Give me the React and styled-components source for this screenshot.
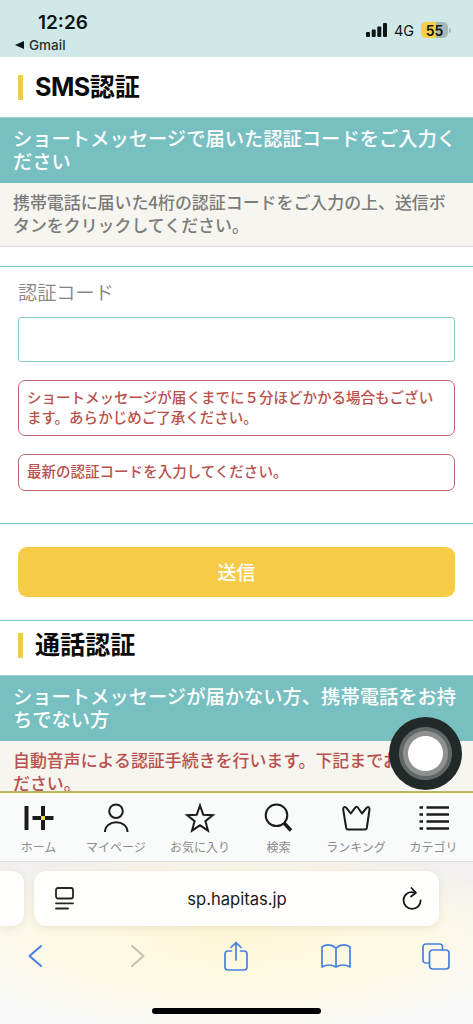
import React from 'react';
import styled, { createGlobalStyle } from 'styled-components';

const GlobalStyle = createGlobalStyle`
  * { box-sizing: border-box; }
  body {
    margin: 0;
    background: #fff;
    font-family: "Noto Sans CJK JP", "Noto Sans", sans-serif;
  }
  h2, h3, p { margin: 0; }
  svg { display: block; flex: none; overflow: visible; }
`;

const ui = '"Inter", "Liberation Sans", sans-serif';

const Screen = styled.div`
  position: relative;
  width: 473px;
  height: 1024px;
  display: flex;
  flex-direction: column;
  overflow: hidden;
  background: #fff;
`;

const StatusBar = styled.header`
  flex: none;
  display: flex;
  justify-content: space-between;
  height: 57px;
  background: #d0e8e8;
  color: #0d1515;
  font-family: ${ui};
`;

const StatusLeft = styled.div`
  display: flex;
  flex-direction: column;
  padding: 11px 0 0 15px;
`;

const Clock = styled.div`
  padding-left: 23px;
  font-size: 19px;
  line-height: 23px;
  font-weight: 600;
`;

const BackApp = styled.div`
  display: flex;
  align-items: center;
  gap: 5px;
  margin-top: 2px;
  font-size: 13.5px;
  line-height: 18px;
  font-weight: 500;
  color: #2a3333;
`;

const StatusRight = styled.div`
  display: flex;
  align-items: center;
  height: 60px;
  padding-right: 22px;
`;

const Network = styled.span`
  margin: 1px 0 0 7px;
  width: 27px;
  font-size: 14.5px;
`;

const Battery = styled.div`
  display: flex;
  align-items: center;
  justify-content: center;
  width: 27px;
  height: 16px;
  border-radius: 5px;
  background: linear-gradient(90deg, #f7d044 0 55%, #a5b9b9 55%);
  font-size: 14px;
  font-weight: 600;
`;

const BatteryTip = styled.span`
  width: 2px;
  height: 5px;
  margin-left: 1px;
  border-radius: 0 2px 2px 0;
  background: #a5b9b9;
`;

const Content = styled.main`
  flex: none;
  height: 734px;
  overflow: hidden;
`;

const Heading = styled.h2`
  display: flex;
  align-items: center;
  gap: 12px;
  height: ${(p) => p.$height}px;
  padding: 0 18px ${(p) => p.$bottom}px;
  font-family: "Inter", "Noto Sans CJK JP", sans-serif;
  font-size: 25.1px;
  line-height: 30px;
  font-weight: 700;
  color: #0b0b0b;
  &::before {
    content: "";
    width: 5px;
    height: 25px;
    background: #efcb50;
  }
`;

const HeadingText = styled.span`
  padding-bottom: ${(p) => p.$lift || 0}px;
`;

const Latin = styled.span`
  display: inline-block;
  letter-spacing: -0.5px;
`;

const Banner = styled.h3`
  height: 66px;
  padding: 9px 13px 0;
  border-top: 1px solid #a5d0d0;
  background: #78bfc1;
  color: #fff;
  font-size: 19.3px;
  line-height: 22.5px;
  font-weight: 500;
  white-space: nowrap;
`;

const Lead = styled.p`
  height: 64px;
  padding: 8px 13px 0;
  border-bottom: 1.5px solid #dadada;
  background: #f6f5ef;
  color: ${(p) => (p.$alert ? '#b9504d' : '#7b7b7a')};
  font-size: 16.93px;
  line-height: 22.7px;
  font-weight: 500;
  white-space: nowrap;
`;

const Form = styled.section`
  margin-top: 19px;
  height: 258px;
  padding: 13px 18px 0;
  border-top: 1px solid #84c3bc;
  border-bottom: 1px solid #84c3bc;
`;

const Label = styled.label`
  display: block;
  height: 37px;
  font-size: 19.2px;
  line-height: 24px;
  font-weight: 350;
  color: #858585;
`;

const CodeInput = styled.input`
  display: block;
  width: 437px;
  height: 45px;
  border: 1.5px solid #8ac8c5;
  border-radius: 3px;
  background: #fff;
  outline: none;
`;

const Notice = styled.p`
  margin-top: 18px;
  height: ${(p) => p.$height}px;
  padding: 6px 8px 0;
  border: 1px solid #b96b69;
  border-radius: 7px;
  color: #b9504d;
  font-size: 14.53px;
  line-height: 19.5px;
  font-weight: 500;
  white-space: nowrap;
`;

const Actions = styled.div`
  height: 97px;
  padding: 23px 18px 0;
  border-bottom: 1px solid #84bfc0;
`;

const Submit = styled.button`
  display: block;
  width: 437px;
  height: 50px;
  border: 0;
  border-radius: 9px;
  background: #f6cb45;
  color: #fff;
  font: 500 19px/48px "Noto Sans CJK JP", sans-serif;
  padding: 0;
`;

const TabBar = styled.nav`
  flex: none;
  display: flex;
  height: 71px;
  padding-top: 11px;
  border-top: 2px solid #b9b667;
  border-bottom: 1px solid #dcdede;
  background: linear-gradient(#fafbdc 0 1px, #f9fafa 2px);
`;

const Tab = styled.div`
  display: flex;
  flex-direction: column;
  align-items: center;
  width: ${(p) => p.$width}px;
  color: #8b8b8b;
  font-size: 12px;
  line-height: 17px;
  white-space: nowrap;
`;

const TabIcon = styled.svg`
  width: 32px;
  height: 30px;
  margin-bottom: 4px;
  fill: none;
  stroke: #1b1b1b;
  stroke-width: 2;
`;

const Browser = styled.footer`
  position: relative;
  flex: 1;
  display: flex;
  flex-direction: column;
  background:
    radial-gradient(ellipse 66% 58% at 50% 47%, #fdf7d8 0%, rgba(254, 250, 226, 0.9) 55%, rgba(250, 249, 246, 0) 100%),
    linear-gradient(#f1efef, #f8f8f7 60%, #f8f8f8);
`;

const AddressRow = styled.div`
  display: flex;
  gap: 10px;
  padding-top: 9px;
`;

const PreviousTab = styled.div`
  width: 24px;
  height: 55px;
  border-radius: 0 12px 12px 0;
  background: #fffefc;
  box-shadow: 0 2px 8px rgba(120, 100, 50, 0.13);
`;

const AddressBar = styled.div`
  display: flex;
  align-items: center;
  justify-content: space-between;
  width: 405px;
  height: 55px;
  padding: 0 17px 0 21px;
  border-radius: 12px;
  background: #fffefc;
  box-shadow: 0 2px 8px rgba(120, 100, 50, 0.13);
  color: #1a1a1a;
  font-family: ${ui};
  font-size: 16.6px;
`;

const Url = styled.span`
  padding-right: 2px;
`;

const Toolbar = styled.div`
  display: grid;
  grid-template-columns: 70px 136px 60px 140px 60px;
  align-items: center;
  justify-items: center;
  height: 60px;
`;

const LineIcon = styled.svg`
  fill: none;
  stroke: ${(p) => p.$color};
  stroke-width: ${(p) => p.$weight || 1.7};
  stroke-linecap: round;
  stroke-linejoin: round;
`;

const HomeIndicator = styled.div`
  align-self: center;
  width: 169px;
  height: 6px;
  margin-top: 22px;
  border-radius: 3px;
  background: #000;
`;

const TouchButton = styled.div`
  position: absolute;
  left: 389px;
  top: 717px;
  width: 73px;
  height: 73px;
  border-radius: 50%;
  background: radial-gradient(circle, #fff 17px, #8f9191 18px 22px, #626868 23px 26px, #222a29 27px);
`;

const blue = '#4580e0';

export default function App() {
  return (
    <Screen>
      <GlobalStyle />
      <StatusBar>
        <StatusLeft>
          <Clock>12:26</Clock>
          <BackApp>
            <svg width="9" height="8" viewBox="0 0 9 8"><path d="M0 4L9 0V8Z" fill="#0d1515" /></svg>
            Gmail
          </BackApp>
        </StatusLeft>
        <StatusRight>
          <svg width="21" height="14" viewBox="0 0 21 14" fill="#0d1515">
            <rect x="0" y="9" width="4" height="5" rx="1" />
            <rect x="5.7" y="6.5" width="4" height="7.5" rx="1" />
            <rect x="11.3" y="3.5" width="4" height="10.5" rx="1" />
            <rect x="17" y="0" width="4" height="14" rx="1" />
          </svg>
          <Network>4G</Network>
          <Battery>55</Battery>
          <BatteryTip />
        </StatusRight>
      </StatusBar>

      <Content>
        <Heading $height={60} $bottom={0}><HeadingText><Latin>SMS</Latin>認証</HeadingText></Heading>
        <Banner>ショートメッセージで届いた認証コードをご入力く<br />ださい</Banner>
        <Lead>携帯電話に届いた4桁の認証コードをご入力の上、送信ボ<br />タンをクリックしてください。</Lead>

        <Form>
          <Label htmlFor="code">認証コード</Label>
          <CodeInput id="code" />
          <Notice $height={56}>ショートメッセージが届くまでに５分ほどかかる場合もござい<br />ます。あらかじめご了承ください。</Notice>
          <Notice $height={37}>最新の認証コードを入力してください。</Notice>
        </Form>
        <Actions><Submit>送信</Submit></Actions>

        <Heading $height={54} $bottom={5}><HeadingText $lift={2}>通話認証</HeadingText></Heading>
        <Banner>ショートメッセージが届かない方、携帯電話をお持<br />ちでない方</Banner>
        <Lead $alert>自動音声による認証手続きを行います。下記までお電話く<br />ださい。</Lead>
      </Content>

      <TabBar>
        <Tab $width={77}>
          <TabIcon viewBox="0 0 32 30">
            <path d="M3.500 2V26M20 2V26M9.500 14H30.500" strokeWidth="4" />
            <rect x="18" y="12" width="4" height="4" fill="#eadb3c" stroke="none" />
          </TabIcon>
          ホーム
        </Tab>
        <Tab $width={78}>
          <TabIcon viewBox="0 0 32 30">
            <circle cx="16" cy="7.200" r="6.800" />
            <path d="M5 28C5 15 27.500 15 27.500 28" />
          </TabIcon>
          マイページ
        </Tab>
        <Tab $width={90}>
          <TabIcon viewBox="0 0 32 30">
            <path d="M16 1.500L19.300 10.800L28.800 11.200L21.400 17.200L24 26.600L16 21.300L8 26.600L10.600 17.200L3.200 11.200L12.700 10.800Z" />
          </TabIcon>
          お気に入り
        </Tab>
        <Tab $width={67}>
          <TabIcon viewBox="0 0 32 30">
            <circle cx="13.500" cy="11.300" r="10.800" />
            <path d="M21 19L28 26.500" strokeWidth="3.500" />
          </TabIcon>
          検索
        </Tab>
        <Tab $width={88}>
          <TabIcon viewBox="0 0 32 30" strokeLinejoin="round">
            <path d="M8 25.500H25Q26.500 25.500 26.800 24L29.500 5.500Q29.500 2 26.800 3.600L22 9.500L18 3.800Q16.500 1.500 15 3.800L10.800 9.500L6.200 3.600Q3 2 3.200 5.500L6.200 24Q6.500 25.500 8 25.500Z" />
          </TabIcon>
          ランキング
        </Tab>
        <Tab $width={67}>
          <TabIcon viewBox="0 0 32 30">
            <path d="M1.500 3.500H5M1.500 10.500H5M1.500 17.500H5M1.500 24.500H5M8.500 3.500H31M8.500 10.500H31M8.500 17.500H31M8.500 24.500H31" strokeWidth="2.600" />
          </TabIcon>
          カテゴリ
        </Tab>
      </TabBar>

      <Browser>
        <AddressRow>
          <PreviousTab />
          <AddressBar>
            <LineIcon width="19" height="23" viewBox="0 0 19 23" $color="#252525" $weight={1.8}>
              <rect x="1" y="1" width="17" height="10.500" rx="2" />
              <path d="M1 16.300H18M1 21.500H13" />
            </LineIcon>
            <Url>sp.hapitas.jp</Url>
            <LineIcon width="20" height="23" viewBox="0 0 20 23" $color="#171717" $weight={1.8}>
              <path d="M12.800 5.700C6.500 3.500 1.500 8 1.500 13.300A8.600 8.600 0 0 0 18.700 13.300" />
              <path d="M9.500 1L14 5.800L9 9.500" />
            </LineIcon>
          </AddressBar>
        </AddressRow>
        <Toolbar>
          <LineIcon width="14" height="22" viewBox="0 0 14 22" $color={blue} $weight={2}>
            <path d="M13 1L1.500 11L13 21" />
          </LineIcon>
          <LineIcon width="14" height="22" viewBox="0 0 14 22" $color="#c3bfae" $weight={2}>
            <path d="M1 1L12.500 11L1 21" />
          </LineIcon>
          <LineIcon width="24" height="30" viewBox="0 0 24 30" $color={blue}>
            <path d="M7.500 10H4Q1 10 1 13V26Q1 29 4 29H20Q23 29 23 26V13Q23 10 20 10H16.500M12 19V1.500M7 6.500L12 1.500L17 6.500" />
          </LineIcon>
          <LineIcon width="30" height="24" viewBox="0 0 30 24" $color={blue}>
            <path d="M15 4Q8-1.500 1 3V23Q8 19 15 23Q22 19 29 23V3Q22-1.500 15 4V23" />
          </LineIcon>
          <LineIcon width="28" height="27" viewBox="0 0 28 27" $color={blue}>
            <path d="M7 20H4Q1 20 1 17V4Q1 1 4 1H17.500Q20.500 1 20.500 4V6.500" />
            <rect x="7.500" y="7" width="19.500" height="19" rx="3" />
          </LineIcon>
        </Toolbar>
        <HomeIndicator />
      </Browser>

      <TouchButton />
    </Screen>
  );
}
